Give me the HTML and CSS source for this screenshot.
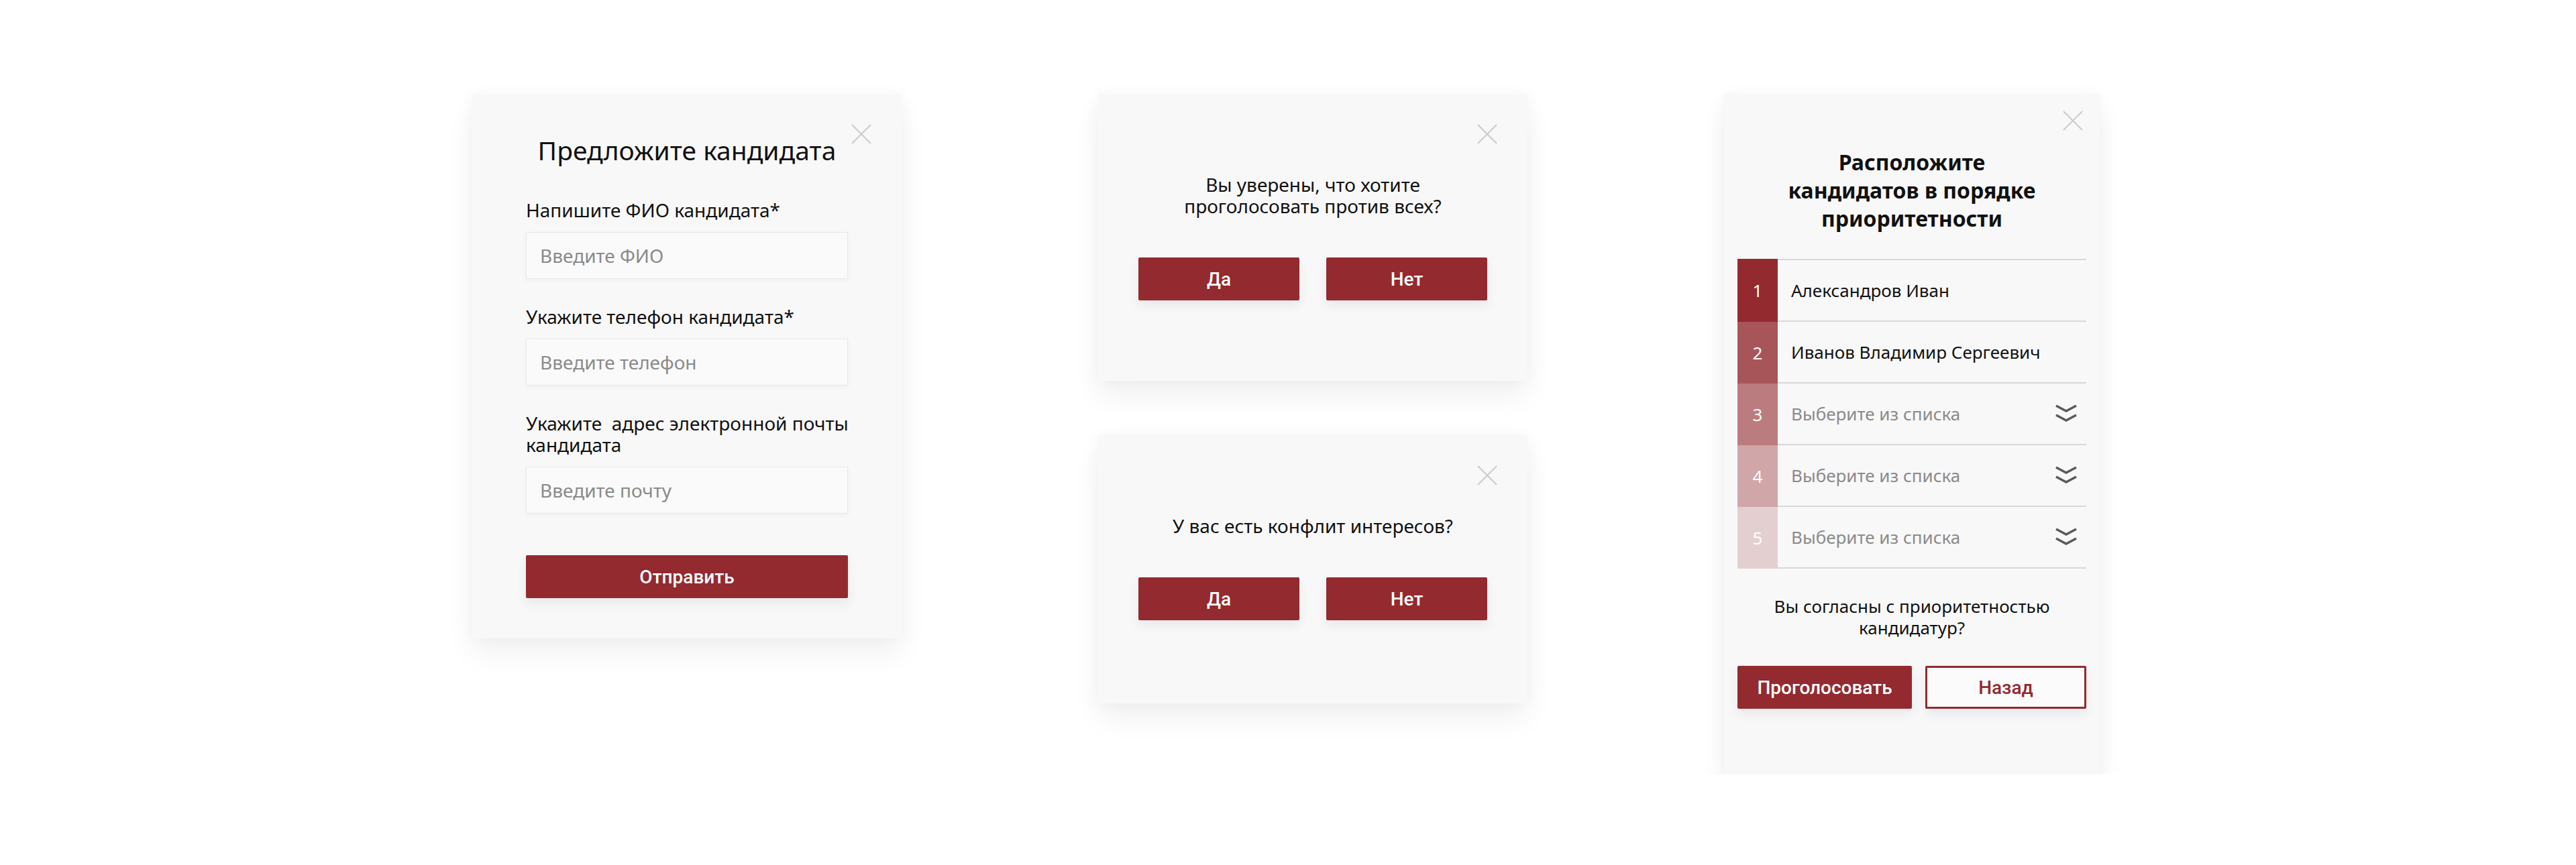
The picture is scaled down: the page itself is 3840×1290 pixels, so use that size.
FILE: index.html
```html
<!DOCTYPE html>
<html lang="ru">
<head>
    <meta charset="UTF-8">
    <meta name="viewport" content="width=device-width, initial-scale=1.0">
    <title>Голосование — модальные окна</title>
    <link rel="stylesheet" href="styles.css">
</head>
<body>

<div class="page">

    <!-- предложить кандидата -->
    <div class="modal form-modal">
        <button type="button" class="close" aria-label="Закрыть">
            <svg width="30" height="30" viewBox="0 0 30 30"><path d="M1 1L29 29M29 1L1 29"/></svg>
        </button>
        <h2 class="modal-title">Предложите кандидата</h2>
        <form id="candidate-form">
            <label for="fio">Напишите ФИО кандидата*</label>
            <input type="text" id="fio" name="fio" placeholder="Введите ФИО">

            <label for="phone">Укажите телефон кандидата*</label>
            <input type="text" id="phone" name="phone" placeholder="Введите телефон">

            <label for="email" class="nowrap">Укажите&nbsp; адрес электронной почты<br>кандидата</label>
            <input type="text" id="email" name="email" placeholder="Введите почту">

            <button type="button" class="btn btn-block">Отправить</button>
        </form>
    </div>

    <div class="column">
        <div class="modal confirm">
            <button type="button" class="close" aria-label="Закрыть">
                <svg width="30" height="30" viewBox="0 0 30 30"><path d="M1 1L29 29M29 1L1 29"/></svg>
            </button>
            <p class="confirm-text">Вы уверены, что хотите проголосовать против всех?</p>
            <div class="btn-row">
                <button type="button" class="btn">Да</button>
                <button type="button" class="btn">Нет</button>
            </div>
        </div>

        <div class="modal confirm">
            <button type="button" class="close" aria-label="Закрыть">
                <svg width="30" height="30" viewBox="0 0 30 30"><path d="M1 1L29 29M29 1L1 29"/></svg>
            </button>
            <p class="confirm-text">У вас есть конфлит интересов?</p>
            <div class="btn-row">
                <button type="button" class="btn">Да</button>
                <button type="button" class="btn">Нет</button>
            </div>
        </div>
    </div>

    <!-- приоритетность -->
    <div class="modal priority">
        <button type="button" class="close" aria-label="Закрыть">
            <svg width="30" height="30" viewBox="0 0 30 30"><path d="M1 1L29 29M29 1L1 29"/></svg>
        </button>
        <h2 class="priority-title">Расположите<br>кандидатов в порядке<br>приоритетности</h2>

        <div class="rank-list">
            <div class="rank-row">
                <div class="rank-num rank-1">1</div>
                <div class="rank-cell">Александров Иван</div>
            </div>
            <div class="rank-row">
                <div class="rank-num rank-2">2</div>
                <div class="rank-cell">Иванов Владимир Сергеевич</div>
            </div>
            <div class="rank-row">
                <div class="rank-num rank-3">3</div>
                <div class="rank-cell empty">Выберите из списка
                    <svg class="chevron" width="34" height="28" viewBox="0 0 34 28"><path d="M2 2L17 10L32 2M2 16L17 24L32 16"/></svg>
                </div>
            </div>
            <div class="rank-row">
                <div class="rank-num rank-4">4</div>
                <div class="rank-cell empty">Выберите из списка
                    <svg class="chevron" width="34" height="28" viewBox="0 0 34 28"><path d="M2 2L17 10L32 2M2 16L17 24L32 16"/></svg>
                </div>
            </div>
            <div class="rank-row">
                <div class="rank-num rank-5">5</div>
                <div class="rank-cell empty">Выберите из списка
                    <svg class="chevron" width="34" height="28" viewBox="0 0 34 28"><path d="M2 2L17 10L32 2M2 16L17 24L32 16"/></svg>
                </div>
            </div>
        </div>

        <p class="priority-question">Вы согласны с приоритетностью кандидатур?</p>

        <div class="btn-row btn-row-split">
            <button type="button" class="btn btn-vote">Проголосовать</button>
            <button type="button" class="btn btn-outline">Назад</button>
        </div>
    </div>

</div>

</body>
</html>
```

FILE: styles.css
```css
* {
    box-sizing: border-box;
}
body {
    margin: 0;
    background-color: #fff;
    font-family: "Noto Sans", "Open Sans", sans-serif;
    color: #111;
}
.page {
    display: flex;
    justify-content: center;
    align-items: flex-start;
    gap: 293px;
    padding: 140px 6px 0 0;
}
.column {
    display: flex;
    flex-direction: column;
    gap: 81px;
}
.modal {
    position: relative;
    background-color: #f8f8f8;
    box-shadow: 0 22px 40px rgba(0, 0, 0, 0.06), 0 0 24px rgba(0, 0, 0, 0.03);
}
.close {
    position: absolute;
    top: 45px;
    right: 45px;
    width: 30px;
    height: 30px;
    padding: 0;
    border: none;
    background: none;
    cursor: pointer;
}
.close svg {
    display: block;
    stroke: #cbcbcb;
    stroke-width: 2;
}

/* form */
.form-modal {
    width: 640px;
    padding: 61px 80px 60px;
}
.modal-title {
    margin: 0 0 50px;
    font-size: 39px;
    line-height: 46px;
    font-weight: 400;
    text-align: center;
}
label {
    display: block;
    font-size: 28px;
    line-height: 32px;
    margin-bottom: 17px;
}
label.nowrap {
    white-space: nowrap;
}
input[type="text"] {
    display: block;
    width: 100%;
    height: 70px;
    margin: 0 0 40px;
    padding: 0 20px;
    border: 1px solid #e5e8ed;
    background-color: #fafafa;
    box-shadow: 0 3px 8px rgba(30, 40, 90, 0.04);
    font-family: inherit;
    font-size: 28px;
    color: #111;
}
input[type="text"]:last-of-type {
    margin-bottom: 62px;
}
input::placeholder {
    color: #8a8a8a;
}

/* buttons */
.btn {
    height: 64px;
    width: 240px;
    border: none;
    border-radius: 2px;
    background-color: #932a2f;
    color: #fff;
    font-family: Roboto, sans-serif;
    font-weight: 500;
    font-size: 28px;
    box-shadow: 0 8px 16px rgba(40, 50, 90, 0.08);
    cursor: pointer;
}
.btn-block {
    display: block;
    width: 100%;
}
.btn-row {
    display: flex;
    justify-content: center;
    gap: 40px;
}

/* confirm */
.confirm {
    width: 640px;
    min-height: 400px;
    padding: 119px 60px 120px;
    text-align: center;
}
.confirm-text {
    max-width: 460px;
    margin: 0 auto 61px;
    font-size: 28px;
    line-height: 32px;
}

/* priority */
.priority {
    width: 560px;
    padding: 81px 20px 98px;
}
.priority .close {
    top: 25px;
    right: 25px;
}
.priority-title {
    margin: 0 0 39px;
    font-size: 32px;
    line-height: 42px;
    font-weight: 700;
    text-align: center;
}
.rank-row {
    display: flex;
    height: 92px;
}
.rank-row:first-child {
    height: 94px;
}
.rank-row:first-child .rank-cell {
    border-top: 2px solid #d8d8d8;
}
.rank-num {
    width: 60px;
    display: flex;
    align-items: center;
    justify-content: center;
    color: #fff;
    font-size: 26px;
}
.rank-1 { background-color: #932a2f; }
.rank-2 { background-color: #a8555a; }
.rank-3 { background-color: #bb7c7f; }
.rank-4 { background-color: #d0a6a8; }
.rank-5 { background-color: #e4cfd0; }
.rank-cell {
    flex: 1;
    display: flex;
    align-items: center;
    justify-content: space-between;
    padding: 0 13px 0 20px;
    border-bottom: 2px solid #d8d8d8;
    font-size: 26px;
}
.rank-cell.empty {
    color: #8a8a8a;
}
.chevron {
    fill: none;
    stroke: #5a5a5a;
    stroke-width: 3.5;
}
.priority-question {
    margin: 40px 0 41px;
    font-size: 26px;
    line-height: 32px;
    text-align: center;
}
.btn-row-split {
    justify-content: space-between;
    gap: 20px;
}
.btn-vote {
    width: 260px;
}
.btn-outline {
    width: 240px;
    background-color: #fbfbfb;
    border: 3px solid #932a2f;
    color: #932a2f;
}
```
